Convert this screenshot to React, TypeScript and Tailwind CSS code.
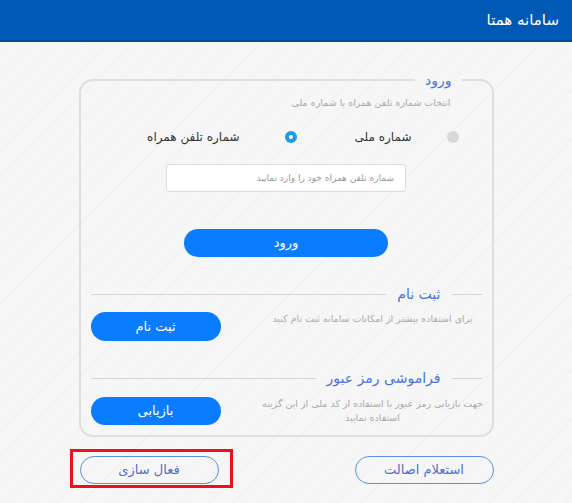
export default function App() {
  return (
    <div
      dir="rtl"
      className="min-h-[503px] bg-[#f5f5f5] bg-[repeating-linear-gradient(135deg,#f6f6f6_0px,#f6f6f6_16px,#f0f0f0_17px,#f6f6f6_18px)] font-['DejaVu_Sans',sans-serif]"
    >
      <header className="flex h-[42px] items-center border-b-2 border-[#034b98] bg-[#0059b5] pr-[13px] text-[15px] text-white">
        سامانه همتا
      </header>

      <main className="mx-auto w-[415px] pt-[28px]">
        <fieldset className="rounded-[14px] border-2 border-[#dedede] px-2.5 pb-2.5">
          <legend className="mr-5 px-2.5 text-[14px] leading-5 text-[#4a72d8]">ورود</legend>

          <p className="mt-[5px] pr-[31px] text-[9.5px] leading-4 text-[#a9a9a9]">
            انتخاب شماره تلفن همراه یا شماره ملی
          </p>

          <div className="mt-4 flex h-5 items-center pr-[23px] text-[12px] text-[#333]">
            <span className="h-3 w-3 shrink-0 rounded-full bg-[#d9d9d9]" />
            <span className="mr-[35px] w-[115px] shrink-0 text-right">شماره ملی</span>
            <span className="flex h-3 w-3 shrink-0 items-center justify-center rounded-full bg-[#1d9be3]">
              <span className="h-1 w-1 rounded-full bg-white" />
            </span>
            <span className="mr-[45px] shrink-0">شماره تلفن همراه</span>
          </div>

          <input
            type="text"
            placeholder="شماره تلفن همراه خود را وارد نمایید"
            className="mx-auto mt-[17px] block h-7 w-[240px] rounded-[3px] border border-[#dcdcdc] bg-white px-[11px] text-[9px] text-[#333] placeholder:text-[#9a9a9a] outline-none"
          />

          <button className="mx-auto mt-[37px] block h-7 w-[204px] rounded-full bg-[#0a7cff] text-[13px] text-white">
            ورود
          </button>

          <fieldset className="mt-[27px] border-t border-[#d4d4d4]">
            <legend className="mr-[30px] px-[11px] text-[14px] leading-5 text-[#4a72d8]">ثبت نام</legend>
            <div className="mt-2 flex items-start justify-between">
              <div className="flex w-[218px] flex-col items-center text-[9.5px] leading-[14px] text-[#aaaaaa]">
                <span className="whitespace-nowrap">برای استفاده بیشتر از امکانات سامانه ثبت نام کنید</span>
              </div>
              <button className="h-[29px] w-[130px] rounded-full bg-[#0a7cff] text-[13px] text-white">
                ثبت نام
              </button>
            </div>
          </fieldset>

          <fieldset className="mt-[27px] border-t border-[#d4d4d4]">
            <legend className="mr-[30px] px-[11px] text-[14px] leading-5 text-[#4a72d8]">
              فراموشی رمز عبور
            </legend>
            <div className="mt-[9px] flex items-start justify-between">
              <div className="flex w-[218px] flex-col items-center text-[9.5px] leading-[14px] text-[#aaaaaa]">
                <span className="whitespace-nowrap">جهت بازیابی رمز عبور با استفاده از کد ملی از این گزینه</span>
                <span className="whitespace-nowrap">استفاده نمایید</span>
              </div>
              <button className="h-7 w-[130px] rounded-full bg-[#0a7cff] text-[13px] text-white">
                بازیابی
              </button>
            </div>
          </fieldset>
        </fieldset>

        <div className="mt-[19px] flex justify-between pl-px">
          <button className="h-7 w-[139px] rounded-full border-[1.5px] border-[#5b8fe2] text-[13px] text-[#4f6fd0]">
            استعلام اصالت
          </button>
          <div className="relative">
            <button className="h-7 w-[139px] rounded-full border-[1.5px] border-[#5b8fe2] text-[13px] text-[#4f6fd0]">
              فعال سازی
            </button>
            <div className="absolute -bottom-[4px] -left-[10px] -right-[14px] -top-[7px] border-[3px] border-[#e8131b]" />
          </div>
        </div>
      </main>
    </div>
  );
}
